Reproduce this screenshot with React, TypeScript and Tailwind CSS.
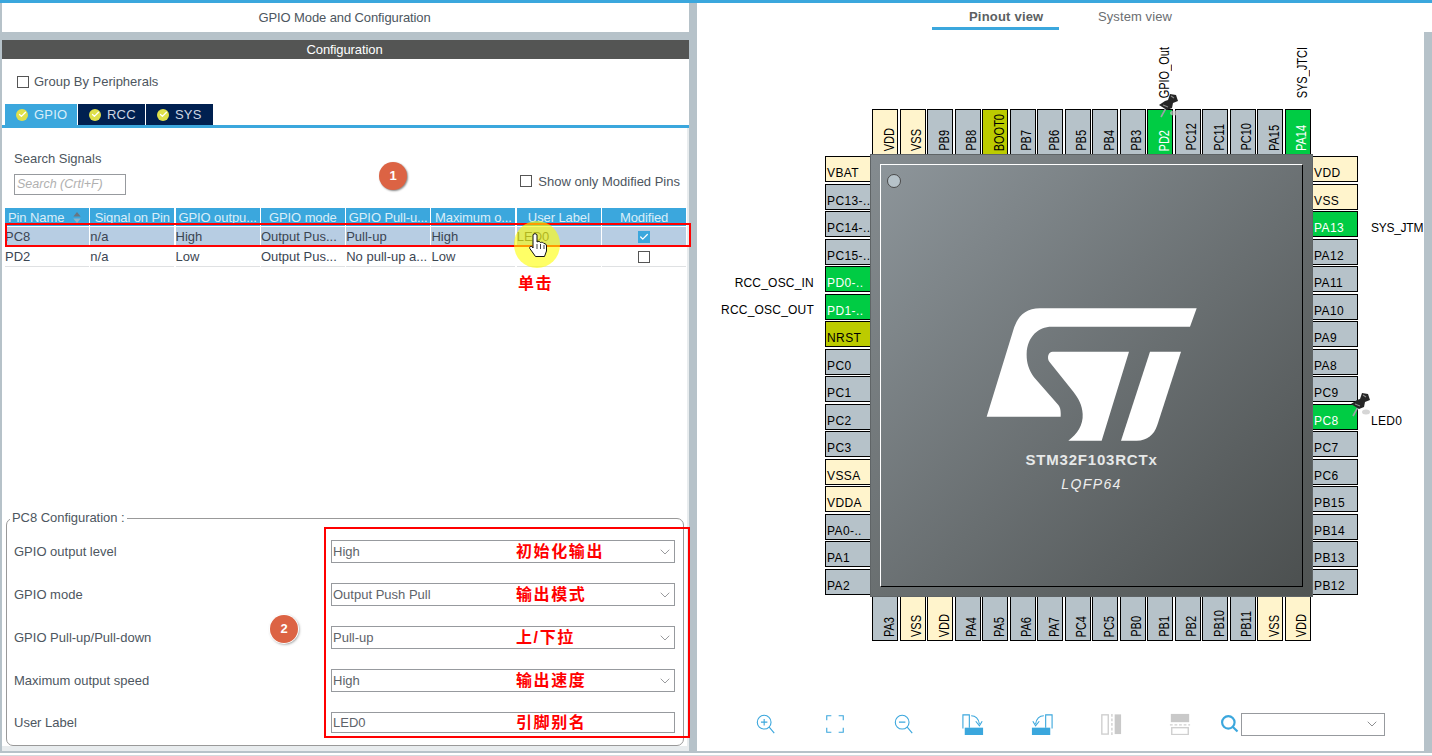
import type { ReactNode } from 'react';
import { Check, ChevronDown } from 'lucide-react';

const FONT = "font-['Liberation_Sans','Noto_Sans_CJK_SC',sans-serif]";

type PinKind = 'io' | 'power' | 'boot' | 'on';

const pinStyles: Record<PinKind, string> = {
  io: 'bg-[#b6c2c9] text-black',
  power: 'bg-[#fff4cc] text-black',
  boot: 'bg-[#bccb00] text-black',
  on: 'bg-[#00cc44] text-white',
};

const topPins: [string, PinKind][] = [
  ['VDD', 'power'], ['VSS', 'power'], ['PB9', 'io'], ['PB8', 'io'],
  ['BOOT0', 'boot'], ['PB7', 'io'], ['PB6', 'io'], ['PB5', 'io'],
  ['PB4', 'io'], ['PB3', 'io'], ['PD2', 'on'], ['PC12', 'io'],
  ['PC11', 'io'], ['PC10', 'io'], ['PA15', 'io'], ['PA14', 'on'],
];

const bottomPins: [string, PinKind][] = [
  ['PA3', 'io'], ['VSS', 'power'], ['VDD', 'power'], ['PA4', 'io'],
  ['PA5', 'io'], ['PA6', 'io'], ['PA7', 'io'], ['PC4', 'io'],
  ['PC5', 'io'], ['PB0', 'io'], ['PB1', 'io'], ['PB2', 'io'],
  ['PB10', 'io'], ['PB11', 'io'], ['VSS', 'power'], ['VDD', 'power'],
];

const leftPins: [string, PinKind][] = [
  ['VBAT', 'power'], ['PC13-..', 'io'], ['PC14-..', 'io'], ['PC15-..', 'io'],
  ['PD0-..', 'on'], ['PD1-..', 'on'], ['NRST', 'boot'], ['PC0', 'io'],
  ['PC1', 'io'], ['PC2', 'io'], ['PC3', 'io'], ['VSSA', 'power'],
  ['VDDA', 'power'], ['PA0-..', 'io'], ['PA1', 'io'], ['PA2', 'io'],
];

const rightPins: [string, PinKind][] = [
  ['VDD', 'power'], ['VSS', 'power'], ['PA13', 'on'], ['PA12', 'io'],
  ['PA11', 'io'], ['PA10', 'io'], ['PA9', 'io'], ['PA8', 'io'],
  ['PC9', 'io'], ['PC8', 'on'], ['PC7', 'io'], ['PC6', 'io'],
  ['PB15', 'io'], ['PB14', 'io'], ['PB13', 'io'], ['PB12', 'io'],
];

const columns = [
  'Pin Name', 'Signal on Pin', 'GPIO outpu...', 'GPIO mode',
  'GPIO Pull-u...', 'Maximum o...', 'User Label', 'Modified',
];

const rows = [
  { cells: ['PC8', 'n/a', 'High', 'Output Pus...', 'Pull-up', 'High', 'LED0'], modified: true },
  { cells: ['PD2', 'n/a', 'Low', 'Output Pus...', 'No pull-up a...', 'Low', ''], modified: false },
];

const configRows = [
  { label: 'GPIO output level', value: 'High', note: '初始化输出', h: 'h-[23px]', gap: 'mb-[20px]' },
  { label: 'GPIO mode', value: 'Output Push Pull', note: '输出模式', h: 'h-[23px]', gap: 'mb-[20px]' },
  { label: 'GPIO Pull-up/Pull-down', value: 'Pull-up', note: '上/下拉', h: 'h-[23px]', gap: 'mb-[20px]' },
  { label: 'Maximum output speed', value: 'High', note: '输出速度', h: 'h-[23px]', gap: 'mb-[20px]' },
  { label: 'User Label', value: 'LED0', note: '引脚别名', h: 'h-[21px]', gap: '' },
];

const tabs = [
  { name: 'GPIO', w: 'w-[72px]', cls: 'bg-[#3ba7dd] text-[#d9eef9]' },
  { name: 'RCC', w: 'w-[67px]', cls: 'bg-[#002050] text-[#cdd6e2] ml-[1px]' },
  { name: 'SYS', w: 'w-[67px]', cls: 'bg-[#002050] text-[#cdd6e2] ml-[1px]' },
];

function VerticalPin({ name, kind, top }: { name: string; kind: PinKind; top: boolean }) {
  return (
    <div
      className={`flex h-full w-[26px] items-end justify-center border border-black pl-[7px] ${top ? 'border-b-0' : 'border-t-0'} ${pinStyles[kind]}`}
    >
      <span className="mb-[3px] rotate-180 scale-x-125 text-[11px] leading-[14px] [writing-mode:vertical-rl]">{name}</span>
    </div>
  );
}

function SidePin({ name, kind, side }: { name: string; kind: PinKind; side: 'left' | 'right' }) {
  return (
    <div
      className={`flex h-[26px] w-[45px] items-end border border-black pb-[1px] pl-[1px] text-[12px] leading-[14px] tracking-[0.4px] ${side === 'left' ? 'border-r-0' : 'border-l-0'} ${pinStyles[kind]}`}
    >
      {name}
    </div>
  );
}

function PushPin({ className }: { className: string }) {
  return (
    <svg viewBox="0 0 20 25" className={className}>
      <ellipse cx="15" cy="20" rx="4" ry="2.5" fill="#c4c4c4" opacity="0.7" />
      <path d="M2 24 L7 15" stroke="#9aa3a8" strokeWidth="1.6" />
      <path d="M11 1 L17 2 L19 8 L14 10 L13 15 L8 17 L0 12 L6 8 L9 7 Z" fill="#262626" />
      <path d="M12 3 L15 5 M4 12 L9 14" stroke="#8a8a8a" strokeWidth="1.2" />
    </svg>
  );
}

function StLogo({ className }: { className: string }) {
  return (
    <svg viewBox="0 0 780 660" className={className} fill="#fff">
      <path d="M710 55 L690 110 L275 110 C235 110 202 140 200 190 C199 215 205 238 222 262 L295 345 C300 352 303 358 302 380 L80 380 L160 120 C172 80 195 55 240 55 Z" />
      <path d="M278 185 L507 185 L425 452 L325 452 C352 432 370 405 368 372 C367 345 355 325 340 305 L268 215 C260 203 265 185 278 185 Z" />
      <path d="M570 185 L663 185 L592 405 C582 435 562 452 530 452 L483 452 Z" />
    </svg>
  );
}

function ChipView() {
  return (
    <div className="relative h-[532px] w-[533px]">
      {/* top pins */}
      <div className="absolute left-[47px] top-0 flex h-[45px] w-[439px] justify-between">
        {topPins.map(([name, kind], i) => (
          <VerticalPin key={`${name}${i}`} name={name} kind={kind} top />
        ))}
      </div>
      {/* left pins */}
      <div className="absolute left-0 top-[47px] flex h-[439px] flex-col justify-between">
        {leftPins.map(([name, kind], i) => (
          <SidePin key={`${name}${i}`} name={name} kind={kind} side="left" />
        ))}
      </div>
      {/* right pins */}
      <div className="absolute left-[488px] top-[47px] flex h-[439px] flex-col justify-between">
        {rightPins.map(([name, kind], i) => (
          <SidePin key={`${name}${i}`} name={name} kind={kind} side="right" />
        ))}
      </div>
      {/* bottom pins */}
      <div className="absolute left-[47px] top-[488px] flex h-[44px] w-[439px] justify-between">
        {bottomPins.map(([name, kind], i) => (
          <VerticalPin key={`${name}${i}`} name={name} kind={kind} top={false} />
        ))}
      </div>
      {/* chip body */}
      <div className="absolute left-[45px] top-[45px] h-[443px] w-[443px] border border-[#5f6466] bg-gradient-to-br from-[#858c90] to-[#505453] p-[9px]">
        <div className="relative h-[423px] w-[423px] border-[1px] border-t-white border-l-white border-r-black border-b-black bg-gradient-to-br from-[#8d959a] to-[#4c5050]">
          <div className="absolute left-[6px] top-[9px] h-[14px] w-[14px] rounded-full border border-[#4a4a4a] bg-[#b6c2c9]" />
          <StLogo className="absolute left-[79px] top-[125px] h-[220px] w-[260px]" />
          <div className="absolute left-0 top-[286px] w-full text-center text-[15px] font-bold leading-[18px] tracking-[0.8px] text-[#e6e8e8]">
            STM32F103RCTx
          </div>
          <div className="absolute left-0 top-[310px] w-full text-center text-[14px] italic leading-[18px] tracking-[1.4px] text-[#eeeeee]">
            LQFP64
          </div>
        </div>
      </div>
      {/* pin labels */}
      <span className="absolute left-[332px] top-[-62px] rotate-180 scale-x-125 text-[11px] leading-[14px] text-black [writing-mode:vertical-rl]">GPIO_Out</span>
      <span className="absolute left-[470px] top-[-62px] rotate-180 scale-x-125 text-[11px] leading-[14px] text-black [writing-mode:vertical-rl]">SYS_JTCI</span>
      <span className="absolute right-[544px] top-[167px] whitespace-nowrap text-[12px] leading-[14px] tracking-[0.2px] text-black">RCC_OSC_IN</span>
      <span className="absolute right-[544px] top-[194px] whitespace-nowrap text-[12px] leading-[14px] tracking-[0.2px] text-black">RCC_OSC_OUT</span>
      <span className="absolute left-[546px] top-[112px] whitespace-nowrap text-[12px] leading-[14px] tracking-[-0.27px] text-black">SYS_JTM</span>
      <span className="absolute left-[546px] top-[305px] text-[12px] leading-[14px] tracking-[0.3px] text-black">LED0</span>
      <PushPin className="absolute left-[334px] top-[-16px] h-[25px] w-[20px]" />
      <PushPin className="absolute left-[526px] top-[283px] h-[25px] w-[20px]" />
    </div>
  );
}

function ToolIcon({ children }: { children: ReactNode }) {
  return (
    <svg viewBox="0 0 24 24" className="h-[22px] w-[22px]" fill="none" stroke="#3ba7dd" strokeWidth="1.2">
      {children}
    </svg>
  );
}

function Toolbar() {
  return (
    <div className="mb-[8px] flex h-[38px] items-center pl-[58px]">
      <div className="flex w-[436px] justify-between">
        <ToolIcon>
          <circle cx="10" cy="10" r="7.5" />
          <path d="M15.5 15.5 L21 22 M10 6.5 V13.5 M6.5 10 H13.5" />
        </ToolIcon>
        <ToolIcon>
          <path d="M8 3 H3 V8 M16 3 H21 V8 M3 16 V21 H8 M21 16 V21 H16" />
        </ToolIcon>
        <ToolIcon>
          <circle cx="10" cy="10" r="7.5" />
          <path d="M15.5 15.5 L21 22 M6.5 10 H13.5" />
        </ToolIcon>
        <ToolIcon>
          <path d="M1 17 V2 H8 V16" />
          <path d="M10 3 C15 3 18 6 19 12 M15 9 L19 14 L22 9" />
          <rect x="3" y="16" width="20" height="8" fill="#3ba7dd" stroke="none" />
        </ToolIcon>
        <ToolIcon>
          <path d="M23 17 V2 H16 V16" />
          <path d="M14 3 C9 3 6 6 5 12 M2 9 L5 14 L9 9" />
          <rect x="1" y="16" width="20" height="8" fill="#3ba7dd" stroke="none" />
        </ToolIcon>
        <svg viewBox="0 0 24 24" className="h-[22px] w-[22px]" fill="none" stroke="#cfcfcf" strokeWidth="1.5">
          <rect x="2" y="2" width="7" height="21" />
          <path d="M13 1 V24" strokeDasharray="3 2" />
          <rect x="16" y="1.5" width="7" height="21.5" fill="#c9c9c9" stroke="none" />
        </svg>
        <svg viewBox="0 0 24 24" className="h-[22px] w-[22px]" fill="none" stroke="#cfcfcf" strokeWidth="1.5">
          <rect x="2" y="1" width="20" height="9" fill="#c9c9c9" stroke="none" />
          <path d="M1 13 H23" strokeDasharray="3 2" />
          <rect x="3" y="16" width="18" height="7.5" />
        </svg>
      </div>
      <svg viewBox="0 0 24 24" className="ml-[29px] h-[20px] w-[20px]" fill="none" stroke="#3ba7dd" strokeWidth="2.6">
        <circle cx="10" cy="10" r="7.5" />
        <path d="M15.5 15.5 L21 21" />
      </svg>
      <div className="ml-[1px] flex h-[23px] w-[144px] items-center justify-end border border-[#979a9e] bg-white pr-[4px]">
        <ChevronDown className="h-[16px] w-[16px] text-[#77797c]" strokeWidth={1.25} />
      </div>
    </div>
  );
}

function SignalsTable() {
  return (
    <div className="grid grid-cols-[repeat(8,84px)] gap-x-[1.3px] pl-[3px] text-[13px] leading-[19px]">
      {columns.map((c, i) => (
        <div
          key={c}
          className={`flex h-[18px] items-center overflow-hidden whitespace-nowrap bg-[#3ba7dd] tracking-[-0.1px] text-[#d9eef9] ${i === 0 ? 'justify-between pl-[3px] pr-[8px]' : 'justify-center'}`}
        >
          {c}
          {i === 0 && (
            <svg viewBox="0 0 8 12" className="h-[11px] w-[8px]">
              <path d="M4 0 L8 5 H0 Z" fill="#6a7680" />
              <path d="M4 12 L8 7 H0 Z" fill="#8fb4c9" />
            </svg>
          )}
        </div>
      ))}
      {rows.map((row) => (
        <div key={row.cells[0]} className="contents">
          {row.cells.map((c, i) => (
            <div
              key={i}
              className={`flex h-[20px] items-center overflow-hidden whitespace-nowrap border-b border-[#dfe1e3] text-[#3b4552] ${
                row.modified ? 'mt-[1px] bg-[#b7cde3]' : 'bg-white'
              }`}
            >
              {c}
            </div>
          ))}
          <div className={`flex h-[20px] items-center justify-center border-b border-[#dfe1e3] ${row.modified ? 'mt-[1px] bg-[#b7cde3]' : 'bg-white'}`}>
            {row.modified ? (
              <span className="flex h-[12px] w-[12px] items-center justify-center bg-[#3ba7dd]">
                <Check className="h-[10px] w-[10px] text-white" strokeWidth={3} />
              </span>
            ) : (
              <span className="h-[12px] w-[12px] border border-[#555]" />
            )}
          </div>
        </div>
      ))}
    </div>
  );
}

function ConfigPanel() {
  return (
    <fieldset className="ml-[4px] mr-[3px] h-[235px] rounded-[7px] border border-[#999] pl-[7px] pr-[7px] pt-[15px]">
      <legend className="ml-[-4px] px-[2px] text-[13px] leading-[14px] tracking-[-0.05px] text-[#4d5660]">PC8 Configuration :</legend>
      {configRows.map((r) => (
        <div key={r.label} className={`flex items-center ${r.gap}`}>
          <span className="w-[317px] text-[13px] text-[#4d5660]">{r.label}</span>
          <div className={`flex w-[344px] items-center border border-[#979a9e] pl-[1px] pr-[1px] text-[13px] text-[#5e636a] ${r.h}`}>
            <span className="w-[183px]">{r.value}</span>
            <span className="flex-1 text-[16px] font-bold tracking-[1.6px] text-[#ff0000]">{r.note}</span>
            {r.label !== 'User Label' && <ChevronDown className="h-[16px] w-[16px] text-[#85878a]" strokeWidth={1.25} />}
          </div>
        </div>
      ))}
    </fieldset>
  );
}

export default function App() {
  return (
    <div className={`${FONT} relative h-[756px] w-[1432px] overflow-hidden bg-white`}>
      <div className="h-[3px] bg-[#3ba7dd]" />
      <div className="flex h-[748px] bg-[#b6c2c9] pl-[2px]">
        {/* left panel */}
        <div className="flex h-full w-[687px] flex-col">
          <div className="flex h-[29px] items-center justify-center bg-white pr-[2px] text-[13px] tracking-[-0.1px] text-[#4d5660]">
            GPIO Mode and Configuration
          </div>
          <div className="h-[8px]" />
          <div className="flex h-[19px] items-center justify-center bg-[#545554] pr-[2px] text-[13px] tracking-[-0.1px] text-white">
            Configuration
          </div>
          <div className="flex flex-1 flex-col bg-white">
            <label className="flex h-[45px] items-center gap-[5px] pl-[15px] pt-[1px] text-[13px] text-[#4d5660]">
              <span className="h-[12px] w-[12px] border border-[#555]" />
              Group By Peripherals
            </label>
            <div className="flex h-[24px] border-b-[3px] border-[#3ba7dd] pl-[3px] text-[13px] tracking-[0.2px]">
              {tabs.map((t) => (
                <div key={t.name} className={`flex items-center gap-[6px] pl-[11px] ${t.w} ${t.cls}`}>
                  <span className="flex h-[12px] w-[12px] items-center justify-center rounded-full bg-[#dfe04a]">
                    <Check className="h-[9px] w-[9px] text-white" strokeWidth={3.5} />
                  </span>
                  {t.name}
                </div>
              ))}
            </div>
            <div className="flex flex-1 flex-col bg-[#e8ecee] pb-[5px] pr-[2px]">
              <div className="flex flex-1 flex-col bg-white">
                <div className="flex h-[67px] items-end justify-between pl-[12px] pr-[7px]">
                  <div>
                    <div className="text-[13px] leading-[15px] text-[#4d5660]">Search Signals</div>
                    <div className="mt-[8px] flex h-[21px] w-[112px] items-center border border-[#979a9e] pl-[2px] text-[12.5px] italic text-[#b0b0b0]">
                      Search (Crtl+F)
                    </div>
                  </div>
                  <label className="mb-[4px] flex items-center gap-[6px] text-[13px] text-[#4d5660]">
                    <span className="h-[12px] w-[12px] border border-[#555]" />
                    Show only Modified Pins
                  </label>
                </div>
                <div className="mt-[13px] h-[303px]">
                  <SignalsTable />
                </div>
                <ConfigPanel />
              </div>
            </div>
          </div>
        </div>

        {/* divider */}
        <div className="w-[8px]" />

        {/* right panel */}
        <div className="flex h-full flex-1 flex-col">
          <div className="flex h-[29px] bg-white pl-[235px] text-[13px]">
            <div className="mr-[16px] flex h-[27px] w-[127px] items-center border-b-[3px] border-[#3ba7dd] pl-[37px] pt-[4px] font-bold tracking-[0.2px] text-[#5c5f62]">
              Pinout view
            </div>
            <div className="flex h-[27px] w-[120px] items-center justify-center pt-[1px] tracking-[0.1px] text-[#6b6e71]">
              System view
            </div>
          </div>
          <div className="mr-[8px] flex flex-1 flex-col bg-white">
            <div className="flex-1 pl-[128px] pt-[77px]">
              <ChipView />
            </div>
            <Toolbar />
          </div>
        </div>
      </div>
      <div className="h-[2px] bg-[#b6c2c9]" />
      <div className="mt-[2px] h-[1px] bg-[#d5dbdf]" />

      {/* annotations */}
      <div className="absolute left-[5px] top-[223px] h-[24px] w-[686px] border-2 border-[#ff0000]" />
      <div className="absolute left-[324px] top-[527px] h-[211px] w-[366px] border-2 border-[#ff0000]" />
      <div className="absolute left-[379px] top-[162px] flex h-[28px] w-[28px] items-center justify-center rounded-full bg-[#dc6344] text-[13px] font-bold text-white shadow-[1px_1px_2px_#888]">
        1
      </div>
      <div className="absolute left-[270px] top-[615px] flex h-[28px] w-[28px] items-center justify-center rounded-full bg-[#dc6344] text-[13px] font-bold text-white shadow-[0_0_0_1px_#fff,1px_1px_3px_#777]">
        2
      </div>
      <div className="absolute left-[514px] top-[221px] h-[47px] w-[46px] rounded-full bg-[#ffff00]/60" />
      <svg viewBox="0 0 18 24" className="absolute left-[529px] top-[233px] h-[24px] w-[18px]">
        <path
          d="M4 2 C4 0.3 8 0.3 8 2 V9 C9.5 8 11 8.5 11.5 9.5 C13 9 14.5 9.5 15 10.5 C16.5 10.5 17.5 11.5 17.5 13 V18 L15.5 23.5 H6.5 L0.8 15.5 C0 14 2 12.5 3.2 13.8 L4 15 Z"
          fill="#fff"
          stroke="#111"
          strokeWidth="1"
        />
        <path d="M8 11 V16 M11.5 11 V16 M15 12 V16" stroke="#111" strokeWidth="0.8" />
      </svg>
      <div className="absolute left-[518px] top-[274px] text-[16px] font-bold leading-[20px] tracking-[1.6px] text-[#ff0000]">单击</div>
    </div>
  );
}
